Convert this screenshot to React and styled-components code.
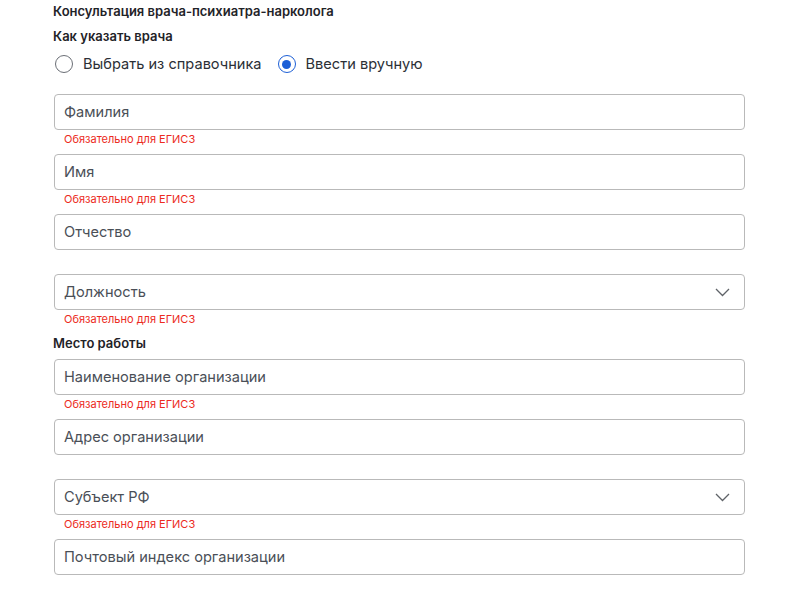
import React from 'react';
import styled, { createGlobalStyle } from 'styled-components';

const GlobalStyle = createGlobalStyle`
  body {
    margin: 0;
    background: #fff;
    font-family: Inter, "Noto Sans", sans-serif;
    color: #1f2328;
  }
`;

const Page = styled.div`
  width: 691px;
  padding: 2px 0 0 54px;
  display: flex;
  flex-direction: column;
`;

const Title = styled.div`
  font-size: 13px;
  font-weight: 600;
  line-height: 18px;
  margin-left: -1px;
`;

const Label = styled.div`
  font-size: 13px;
  font-weight: 600;
  line-height: 18px;
  margin: ${props => props.spacing || '7px 0 0'};
  margin-left: -1px;
`;

const RadioRow = styled.div`
  display: flex;
  align-items: center;
  gap: 15px;
  height: 24px;
  margin: 7px 0 18px;
`;

const RadioOption = styled.label`
  display: flex;
  align-items: center;
  gap: 10px;
  font-size: 14.6px;
  color: #2b2f36;
  cursor: pointer;
`;

const RadioCircle = styled.span`
  width: 18px;
  height: 18px;
  box-sizing: border-box;
  border-radius: 50%;
  border: 1.5px solid ${props => (props.checked ? '#1d5fd6' : '#6b6f76')};
  display: flex;
  align-items: center;
  justify-content: center;
  margin-left: 1px;

  &::after {
    content: '';
    width: 9px;
    height: 9px;
    border-radius: 50%;
    background: #1d5fd6;
    display: ${props => (props.checked ? 'block' : 'none')};
  }
`;

const Field = styled.div`
  display: flex;
  flex-direction: column;
`;

const Box = styled.div`
  height: 36px;
  box-sizing: border-box;
  border: 1px solid #b9b9b9;
  border-radius: 4px;
  padding: 0 14px 0 9px;
  display: flex;
  align-items: center;
  justify-content: space-between;
  font-size: 14.6px;
  color: #4a4f57;
`;

const Helper = styled.div`
  height: 24px;
  box-sizing: border-box;
  padding: 1px 0 0 10px;
  font-size: 11px;
  line-height: 16px;
  color: #ec2b22;
`;

const Chevron = () => (
  <svg width="15" height="9" viewBox="0 0 15 9" fill="none">
    <path d="M1 1l6.5 6.5L14 1" stroke="#5f6368" strokeWidth="1.3" />
  </svg>
);

const FormField = ({ placeholder, error, select }) => (
  <Field>
    <Box>
      <span>{placeholder}</span>
      {select && <Chevron />}
    </Box>
    <Helper>{error ? 'Обязательно для ЕГИСЗ' : ''}</Helper>
  </Field>
);

const App = () => (
  <>
    <GlobalStyle />
    <Page>
      <Title>Консультация врача-психиатра-нарколога</Title>
      <Label>Как указать врача</Label>
      <RadioRow>
        <RadioOption>
          <RadioCircle />
          Выбрать из справочника
        </RadioOption>
        <RadioOption>
          <RadioCircle checked />
          Ввести вручную
        </RadioOption>
      </RadioRow>
      <FormField placeholder="Фамилия" error />
      <FormField placeholder="Имя" error />
      <FormField placeholder="Отчество" />
      <FormField placeholder="Должность" error select />
      <Label spacing="0 0 7px">Место работы</Label>
      <FormField placeholder="Наименование организации" error />
      <FormField placeholder="Адрес организации" />
      <FormField placeholder="Субъект РФ" error select />
      <FormField placeholder="Почтовый индекс организации" />
    </Page>
  </>
);

export default App;
